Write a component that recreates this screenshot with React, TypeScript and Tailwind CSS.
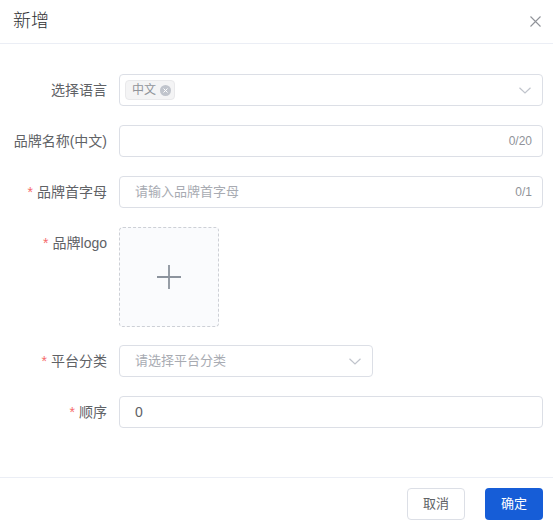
import React from 'react';

const font = { fontFamily: '"Liberation Sans", "Noto Sans CJK SC", sans-serif' };

const Chevron = () => (
  <svg width="12" height="7" viewBox="0 0 12 7" fill="none" stroke="#c0c4cc" strokeWidth={1.2}>
    <path d="M0.5 0.7 L6 6 L11.5 0.7" />
  </svg>
);

interface RowProps {
  label: string;
  required?: boolean;
  className?: string;
  children: React.ReactNode;
}

const Row: React.FC<RowProps> = ({ label, required, className, children }) => (
  <div className={`flex items-start ${className ?? 'mb-[19px]'}`}>
    <div className="w-[119px] shrink-0 pr-[12px] text-right text-[14px] leading-[32px] text-[#606266]">
      {required && <span className="mr-[4px] text-[#f56c6c]">*</span>}
      {label}
    </div>
    {children}
  </div>
);

export default function App() {
  return (
    <div style={font} className="flex h-[529px] w-[553px] flex-col bg-white">
      {/* header */}
      <div className="flex h-[44px] shrink-0 items-center justify-between border-b border-[#ebeef5] pl-[13px] pr-[12px]">
        <span className="text-[18px] font-light text-[#303133]">新增</span>
        <svg width="11" height="11" viewBox="0 0 11 11" stroke="#909399" strokeWidth={1.1}>
          <path d="M0.5 0.5 L10.5 10.5 M10.5 0.5 L0.5 10.5" />
        </svg>
      </div>

      {/* form */}
      <div className="flex-1 pt-[30px] pr-[10px]">
        <Row label="选择语言">
          <div className="flex h-[32px] flex-1 items-center justify-between rounded-[4px] border border-[#dcdfe6] pl-[5px] pr-[11px]">
            <span className="flex h-[20px] items-center gap-[4px] rounded-[4px] border border-[#e9e9eb] bg-[#f4f4f5] pl-[6px] pr-[3px] text-[12px] text-[#909399]">
              中文
              <span className="flex h-[11px] w-[11px] items-center justify-center rounded-full bg-[#c0c4cc]">
                <svg width="5" height="5" viewBox="0 0 5 5" stroke="#fff" strokeWidth={1}>
                  <path d="M0.5 0.5 L4.5 4.5 M4.5 0.5 L0.5 4.5" />
                </svg>
              </span>
            </span>
            <Chevron />
          </div>
        </Row>

        <Row label="品牌名称(中文)">
          <div className="flex h-[32px] flex-1 items-center justify-end rounded-[4px] border border-[#dcdfe6] px-[10px]">
            <span className="text-[12px] text-[#909399]">0/20</span>
          </div>
        </Row>

        <Row label="品牌首字母" required>
          <div className="flex h-[32px] flex-1 items-center justify-between rounded-[4px] border border-[#dcdfe6] pl-[15px] pr-[10px]">
            <span className="text-[13px] text-[#a8abb2]">请输入品牌首字母</span>
            <span className="text-[12px] text-[#909399]">0/1</span>
          </div>
        </Row>

        <Row label="品牌logo" required className="mb-[18px]">
          <div className="flex h-[100px] w-[100px] items-center justify-center rounded-[4px] border border-dashed border-[#cdd0d6] bg-[#fafbfd]">
            <svg width="24" height="24" viewBox="0 0 24 24" stroke="#8c939d" strokeWidth={1.8}>
              <path d="M12 0 V24 M0 12 H24" />
            </svg>
          </div>
        </Row>

        <Row label="平台分类" required>
          <div className="flex h-[32px] w-[254px] items-center justify-between rounded-[4px] border border-[#dcdfe6] pl-[15px] pr-[11px]">
            <span className="text-[13px] text-[#a8abb2]">请选择平台分类</span>
            <Chevron />
          </div>
        </Row>

        <Row label="顺序" required>
          <div className="flex h-[32px] flex-1 items-center rounded-[4px] border border-[#dcdfe6] px-[15px]">
            <span className="text-[14px] text-[#606266]">0</span>
          </div>
        </Row>
      </div>

      {/* footer */}
      <div className="flex h-[52px] shrink-0 items-start justify-end gap-[20px] border-t border-[#ebeef5] pt-[10px] pr-[10px]">
        <button className="h-[32px] w-[58px] rounded-[4px] border border-[#dcdfe6] bg-white text-[13px] text-[#606266]">
          取消
        </button>
        <button className="h-[32px] w-[58px] rounded-[4px] bg-[#165dd7] text-[13px] text-white">
          确定
        </button>
      </div>
    </div>
  );
}
